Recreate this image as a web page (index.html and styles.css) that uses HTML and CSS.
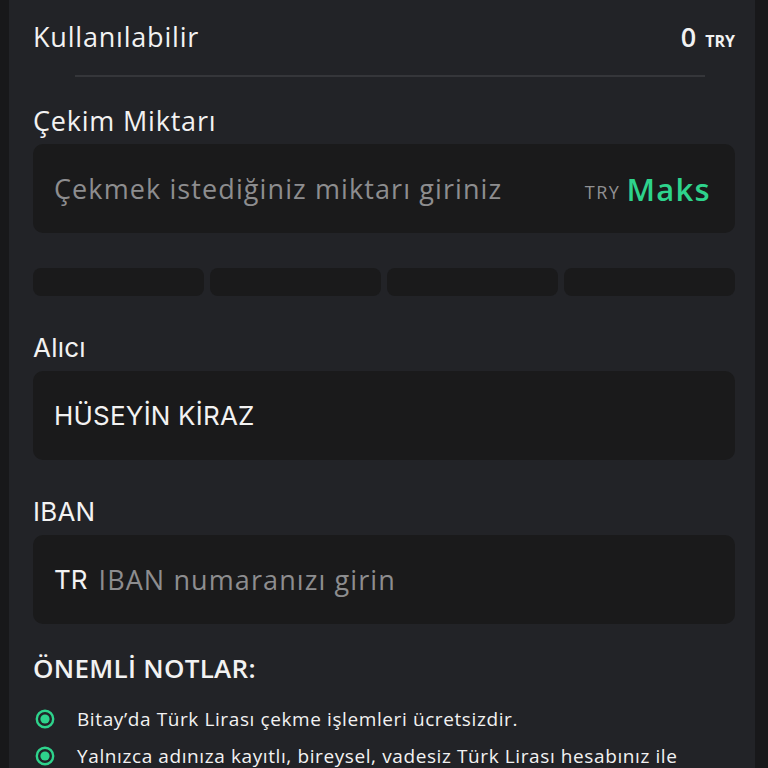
FILE: index.html
```html
<!DOCTYPE html>
<html lang="tr">
<head>
    <meta charset="UTF-8">
    <meta name="viewport" content="width=device-width, initial-scale=1.0">
    <title>TL Çekme | Bitay</title>
    <link rel="stylesheet" href="styles.css">
</head>
<body>
    <div class="panel">
        <div class="balance-row">
            <span class="balance-label">Kullanılabilir</span>
            <span class="balance-value">0 <small>TRY</small></span>
        </div>
        <div class="divider"></div>

        <div class="field">
            <label class="field-label" for="amount">Çekim Miktarı</label>
            <div class="input-box">
                <input type="text" id="amount" placeholder="Çekmek istediğiniz miktarı giriniz">
                <span class="unit">TRY</span>
                <button class="max-btn" type="button">Maks</button>
            </div>
        </div>

        <div class="chips">
            <div class="chip"></div>
            <div class="chip"></div>
            <div class="chip"></div>
            <div class="chip"></div>
        </div>

        <div class="field">
            <label class="field-label label-alt" for="receiver">Alıcı</label>
            <div class="input-box">
                <input type="text" id="receiver" class="value-alt" value="HÜSEYİN KİRAZ" readonly>
            </div>
        </div>

        <div class="field">
            <label class="field-label label-alt" for="iban">IBAN</label>
            <div class="input-box">
                <span class="prefix">TR</span>
                <input type="text" id="iban" placeholder="IBAN numaranızı girin">
            </div>
        </div>

        <h3 class="notes-title">ÖNEMLİ NOTLAR:</h3>
        <ul class="notes">
            <li>
                <svg class="dot" width="20" height="20" viewBox="0 0 20 20"><circle cx="10" cy="10" r="8.2" fill="none" stroke="#2ed38c" stroke-width="2.4"/><circle cx="10" cy="10" r="4.6" fill="#2ed38c"/></svg>
                <span>Bitay’da Türk Lirası çekme işlemleri ücretsizdir.</span>
            </li>
            <li>
                <svg class="dot" width="20" height="20" viewBox="0 0 20 20"><circle cx="10" cy="10" r="8.2" fill="none" stroke="#2ed38c" stroke-width="2.4"/><circle cx="10" cy="10" r="4.6" fill="#2ed38c"/></svg>
                <span>Yalnızca adınıza kayıtlı, bireysel, vadesiz Türk Lirası hesabınız ile</span>
            </li>
        </ul>
    </div>
</body>
</html>
```

FILE: styles.css
```css
html, body {
    margin: 0;
    background: #18181a;
    height: 100%;
    overflow: hidden;
}
body {
    font-family: "Open Sans", "Noto Sans", sans-serif;
    color: #f2f2f2;
}
.panel {
    margin: 0 13px 0 9px;
    min-height: 100%;
    background: #222327;
    padding: 20px 20px 0 24px;
    box-sizing: border-box;
}
.balance-row {
    display: flex;
    justify-content: space-between;
    align-items: baseline;
    height: 34px;
    line-height: 34px;
}
.balance-label {
    font-size: 27px;
    letter-spacing: 0.8px;
}
.balance-value {
    font-size: 27px;
    font-weight: 600;
}
.balance-value small {
    font-size: 16px;
    font-weight: 700;
    margin-left: 2px;
}
.divider {
    height: 2px;
    background: #35363a;
    margin: 21px 30px 0 42px;
}
.field-label {
    display: block;
    font-size: 27px;
    letter-spacing: 0.8px;
    line-height: 34px;
    margin-top: 27px;
    margin-bottom: 6px;
}
.label-alt {
    font-family: Inter, Roboto, sans-serif;
    font-size: 26px;
    letter-spacing: 0.2px;
    margin-top: 35px;
}
.input-box {
    display: flex;
    align-items: center;
    height: 89px;
    background: #1a1a1b;
    border-radius: 10px;
    padding: 0 24px 0 21px;
    box-sizing: border-box;
}
.input-box input {
    flex: 1;
    min-width: 0;
    background: transparent;
    border: none;
    outline: none;
    color: #f2f2f2;
    font-family: "Open Sans", "Noto Sans", sans-serif;
    font-size: 27px;
    letter-spacing: 1.1px;
    padding: 0;
}
.input-box input::placeholder {
    color: #8d8d8f;
}
.input-box .value-alt {
    font-family: Inter, Roboto, sans-serif;
    font-size: 26px;
    letter-spacing: 0.2px;
}
.unit {
    color: #909092;
    font-size: 18px;
    font-weight: 500;
    letter-spacing: 1.5px;
    margin-top: 7px;
    margin-right: 6px;
}
.max-btn {
    background: none;
    border: none;
    padding: 0;
    color: #2ed38c;
    font-family: "Open Sans", "Noto Sans", sans-serif;
    font-size: 31px;
    font-weight: 600;
    letter-spacing: 1.3px;
    cursor: pointer;
}
.prefix {
    font-family: Inter, Roboto, sans-serif;
    font-size: 26px;
    color: #f2f2f2;
    margin-right: 11px;
}
.chips {
    display: grid;
    grid-template-columns: repeat(4, 1fr);
    gap: 6px;
    margin-top: 35px;
}
.chip {
    height: 28px;
    background: #1a1a1b;
    border-radius: 8px;
}
.notes-title {
    font-size: 26px;
    font-weight: 600;
    letter-spacing: 0.3px;
    margin: 27px 0 0;
    line-height: 34px;
}
.notes {
    list-style: none;
    padding: 0;
    margin: 22px 0 0;
}
.notes li {
    display: flex;
    align-items: center;
    gap: 22px;
    font-size: 19px;
    letter-spacing: 0.6px;
    line-height: 24px;
    margin-bottom: 13px;
    padding-left: 2px;
}
.dot {
    flex: none;
}
```
